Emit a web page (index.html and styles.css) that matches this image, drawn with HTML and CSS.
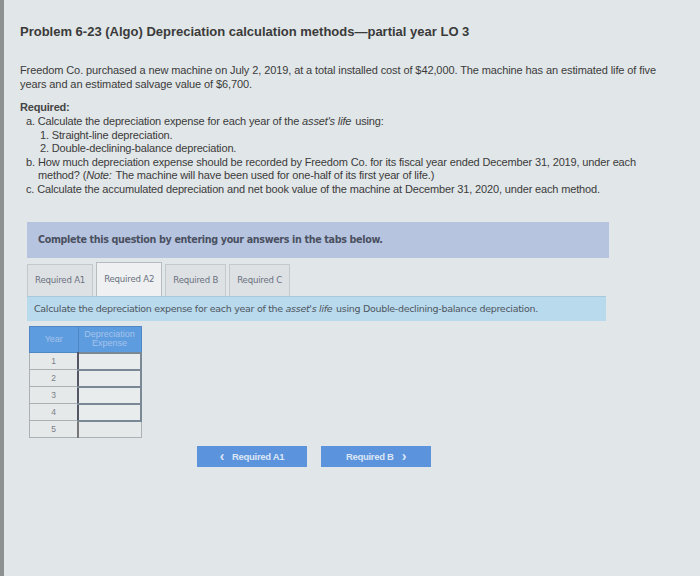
FILE: index.html
```html
<!DOCTYPE html>
<html>
<head>
<meta charset="utf-8">
<link rel="stylesheet" href="styles.css">
</head>
<body>
<div class="edge"></div>
<main class="page">
  <h1 class="title">Problem 6-23 (Algo) Depreciation calculation methods—partial year LO 3</h1>
  <p class="intro">Freedom Co. purchased a new machine on July 2, 2019, at a total installed cost of $42,000. The machine has an estimated life of five years and an estimated salvage value of $6,700.</p>
  <p class="req">Required:</p>
  <div class="list">
    <div class="li">a. Calculate the depreciation expense for each year of the <i>asset's life</i> using:</div>
    <div class="li sub">1. Straight-line depreciation.</div>
    <div class="li sub">2. Double-declining-balance depreciation.</div>
    <div class="li hang"><span class="mk">b.</span><span class="tx">How much depreciation expense should be recorded by Freedom Co. for its fiscal year ended December 31, 2019, under each method? (<i>Note:</i> The machine will have been used for one-half of its first year of life.)</span></div>
    <div class="li">c. Calculate the accumulated depreciation and net book value of the machine at December 31, 2020, under each method.</div>
  </div>

  <div class="box"><span>Complete this question by entering your answers in the tabs below.</span></div>

  <div class="tabs">
    <div class="tab"><span>Required A1</span></div>
    <div class="tab active"><span>Required A2</span></div>
    <div class="tab"><span>Required B</span></div>
    <div class="tab"><span>Required C</span></div>
  </div>
  <div class="instr"><span>Calculate the depreciation expense for each year of the <i>asset's life</i> using Double-declining-balance depreciation.</span></div>

  <table class="grid">
    <thead>
      <tr><th class="c1">Year</th><th class="c2">Depreciation<br>Expense</th></tr>
    </thead>
    <tbody>
      <tr><td class="c1">1</td><td class="c2 inp"></td></tr>
      <tr><td class="c1">2</td><td class="c2 inp"></td></tr>
      <tr><td class="c1">3</td><td class="c2 inp"></td></tr>
      <tr><td class="c1">4</td><td class="c2 inp"></td></tr>
      <tr><td class="c1">5</td><td class="c2 last"></td></tr>
    </tbody>
  </table>

  <div class="nav">
    <div class="btn"><span class="chev">&lsaquo;</span><span>Required A1</span></div>
    <div class="btn"><span>Required B</span><span class="chev r">&rsaquo;</span></div>
  </div>
</main>
</body>
</html>
```

FILE: styles.css
```css
html, body {
  margin: 0;
  padding: 0;
}
body {
  background: #e1e6e8;
  width: 700px;
  height: 576px;
  overflow: hidden;
  position: relative;
  font-family: "Liberation Sans", "Arial", sans-serif;
  color: #3b3b3b;
}
i {
  padding-right: 1px;
}
.edge {
  position: absolute;
  left: 0;
  top: 0;
  width: 4px;
  height: 576px;
  background: #8d9192;
}
.page {
  padding: 24px 0 0 20px;
}
.title {
  margin: 0;
  font-size: 13px;
  line-height: 16px;
  font-weight: 700;
  color: #3a3a3a;
  letter-spacing: 0;
}
.intro {
  margin: 23px 0 0 0;
  width: 655px;
  font-size: 11px;
  line-height: 14px;
  letter-spacing: -0.1px;
}
.req {
  margin: 9px 0 0 0;
  font-size: 11px;
  line-height: 14px;
  font-weight: 700;
  color: #444;
  letter-spacing: -0.2px;
}
.list {
  margin-top: 1px;
  padding-left: 6px;
  font-size: 11px;
  line-height: 13.6px;
  letter-spacing: -0.15px;
}
.li.sub {
  padding-left: 14px;
}
.li.hang {
  display: flex;
  width: 630px;
}
.mk {
  width: 12px;
  flex: none;
}
.tx {
  flex: 1;
}
.box {
  margin: 25px 0 0 7px;
  width: 571px;
  height: 36px;
  background: #b6c4e0;
  font-family: "DejaVu Sans", "Verdana", sans-serif;
  font-weight: 700;
  font-size: 9.6px;
  color: #4a5060;
  padding-left: 11px;
  display: flex;
  align-items: center;
  letter-spacing: -0.35px;
}
.tabs {
  margin: 5px 0 0 7px;
  display: flex;
  gap: 3px;
  height: 33px;
  align-items: flex-end;
}
.tab {
  height: 32px;
  box-sizing: border-box;
  border: 1px solid #c4cacc;
  border-bottom: none;
  background: #dde1e3;
  padding: 0 7px;
  display: flex;
  align-items: center;
  font-family: "DejaVu Sans", sans-serif;
  font-size: 8.6px;
  color: #6a7080;
  letter-spacing: -0.2px;
}
.tab.active {
  background: #eef0f1;
  height: 34px;
  border-color: #b7bcbe;
}
.instr {
  margin: 0 0 0 7px;
  width: 572px;
  height: 24px;
  padding-left: 7px;
  background: #b9d9ec;
  border-top: 1px solid #a8c8de;
  display: flex;
  align-items: center;
  font-family: "DejaVu Sans", sans-serif;
  font-size: 9.5px;
  color: #4e5660;
  letter-spacing: -0.3px;
}
.grid {
  margin: 5px 0 0 9px;
  border-collapse: collapse;
  font-family: "Liberation Sans", sans-serif;
}
.grid th {
  background: #5e9ce0;
  color: #a4c3ea;
  font-weight: 400;
  font-size: 9px;
  line-height: 9px;
  height: 25px;
  padding: 0;
  border: 1px solid #4f86c4;
}
.grid .c1 { width: 47px; }
.grid .c2 { width: 61px; }
.grid td {
  height: 15px;
  padding: 0;
  border: 1px solid #aab0b3;
  background: #e6e9ea;
  font-size: 8.5px;
  color: #7a8088;
  text-align: center;
}
.grid td.inp {
  border: 2px solid #7a8795;
  border-left: 2px solid #556;
  background: #e9ecec;
}
.grid td.last {
  border-left: 2px solid #777;
}
.nav {
  margin: 8px 0 0 177px;
  display: flex;
  gap: 14px;
}
.btn {
  width: 110px;
  height: 21px;
  background: #5b94dc;
  color: #dbe6f6;
  font-family: "Liberation Sans", sans-serif;
  font-weight: 700;
  font-size: 9.5px;
  display: flex;
  align-items: center;
  justify-content: center;
  letter-spacing: -0.3px;
}
.chev {
  font-size: 14px;
  margin-right: 8px;
  line-height: 1;
}
.chev.r {
  margin-right: 0;
  margin-left: 8px;
}
```
